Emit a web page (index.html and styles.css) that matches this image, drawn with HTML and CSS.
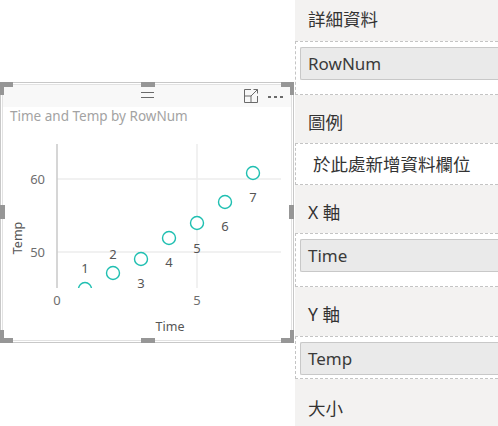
FILE: index.html
```html
<!DOCTYPE html>
<html lang="zh-Hant">
<head>
<meta charset="utf-8">
<link rel="stylesheet" href="styles.css">
</head>
<body>
<div class="page">
  <div class="canvas">
    <div class="visual">
      <div class="frame">
        <div class="vis-header">
          <span class="grip"></span>
          <span class="vis-tools">
            <svg class="focus" width="17" height="16" viewBox="0 0 17 16">
              <path d="M8 1.5H1.5V14.5H14.5V8M1.5 8H8V14.5M8 8L14.5 1.5M10.5 1.5H14.5V5.5" fill="none" stroke="#6a6a6a" stroke-width="1"/>
            </svg>
            <span class="dots"><i></i><i></i><i></i></span>
          </span>
        </div>
        <div class="vis-title">Time and Temp by RowNum</div>
        <svg class="chart" width="288" height="215" viewBox="3 125 288 215">
          <defs>
            <clipPath id="plot"><rect x="56" y="140" width="232" height="148"/></clipPath>
          </defs>
          <line x1="57" y1="179" x2="281" y2="179" class="grid"/>
          <line x1="57" y1="252" x2="281" y2="252" class="grid"/>
          <line x1="197" y1="144" x2="197" y2="288" class="grid"/>
          <line x1="57" y1="144" x2="57" y2="288" class="axis"/>
          <text x="45" y="184" class="tick" text-anchor="end">60</text>
          <text x="45" y="257" class="tick" text-anchor="end">50</text>
          <text x="57" y="305" class="tick" text-anchor="middle">0</text>
          <text x="197" y="305" class="tick" text-anchor="middle">5</text>
          <text x="170" y="331" class="atitle" text-anchor="middle">Time</text>
          <text x="0" y="0" class="atitle" text-anchor="middle" transform="translate(22 238) rotate(-90)">Temp</text>
          <g clip-path="url(#plot)" class="pts">
            <circle cx="85" cy="289" r="6.5"/>
            <circle cx="113" cy="273" r="6.5"/>
            <circle cx="141" cy="259" r="6.5"/>
            <circle cx="169" cy="238" r="6.5"/>
            <circle cx="197" cy="223" r="6.5"/>
            <circle cx="225" cy="202" r="6.5"/>
            <circle cx="253" cy="173" r="6.5"/>
          </g>
          <g class="lbl" text-anchor="middle">
            <text x="85" y="273">1</text>
            <text x="113" y="259">2</text>
            <text x="141" y="288">3</text>
            <text x="169" y="267">4</text>
            <text x="197" y="253">5</text>
            <text x="225" y="231">6</text>
            <text x="253" y="202">7</text>
          </g>
        </svg>
      </div>
      <span class="h h-tl"></span>
      <span class="h h-tr"></span>
      <span class="h h-bl"></span>
      <span class="h h-br"></span>
      <span class="h h-tm"></span>
      <span class="h h-bm"></span>
      <span class="h h-lm"></span>
      <span class="h h-rm"></span>
    </div>
  </div>
  <div class="pane">
    <div class="sec sec-first">詳細資料</div>
    <div class="well well-a"><div class="pill">RowNum</div></div>
    <div class="sec">圖例</div>
    <div class="well well-empty">於此處新增資料欄位</div>
    <div class="sec">X 軸</div>
    <div class="well well-a"><div class="pill">Time</div></div>
    <div class="sec sec-y">Y 軸</div>
    <div class="well well-b"><div class="pill">Temp</div></div>
    <div class="sec sec-last">大小</div>
  </div>
</div>
</body>
</html>
```

FILE: styles.css
```css
html, body {
  margin: 0;
  padding: 0;
  background: #ffffff;
}
body {
  width: 498px;
  height: 426px;
  overflow: hidden;
  font-family: "Noto Sans", "Noto Sans CJK TC", sans-serif;
}
.page {
  display: flex;
  height: 426px;
}
.canvas {
  width: 295px;
  flex: none;
  padding-top: 82px;
  box-sizing: border-box;
}
.visual {
  position: relative;
  width: 294px;
  height: 261px;
  box-sizing: border-box;
  border: 1px solid #c8c8c8;
  padding: 1px;
}
.frame {
  height: 100%;
  box-sizing: border-box;
  border: 1px solid #e2e2e2;
  display: flex;
  flex-direction: column;
  background: #fff;
}
.vis-header {
  height: 22px;
  flex: none;
  background: #f8f8f8;
  display: flex;
  align-items: center;
  justify-content: center;
  position: relative;
}
.grip {
  width: 13px;
  height: 4px;
  border-top: 1px solid #6a6a6a;
  border-bottom: 1px solid #6a6a6a;
  margin-top: -2px;
}
.vis-tools {
  position: absolute;
  right: 8px;
  top: 3px;
  display: flex;
  align-items: center;
  gap: 8px;
}
.focus {
  display: block;
}
.dots {
  display: flex;
  gap: 3px;
  margin-top: 2px;
}
.dots i {
  display: block;
  width: 3px;
  height: 2px;
  background: #6a6a6a;
}
.vis-title {
  height: 18px;
  flex: none;
  padding-left: 7px;
  font-size: 13.5px;
  line-height: 18px;
  color: #a3a3a3;
  white-space: nowrap;
}
.chart {
  display: block;
  flex: none;
}
.grid {
  stroke: #ececec;
  stroke-width: 1.5;
}
.axis {
  stroke: #c8c8c8;
  stroke-width: 1.5;
}
.tick {
  font-family: "Noto Sans", sans-serif;
  font-size: 13px;
  fill: #6e6e6e;
}
.atitle {
  font-family: "Noto Sans", sans-serif;
  font-size: 12.5px;
  fill: #555;
}
.pts circle {
  fill: #fff;
  stroke: #1fbfb1;
  stroke-width: 1.4;
}
.lbl text {
  font-family: "Noto Sans", sans-serif;
  font-size: 13px;
  fill: #555;
}
.h {
  position: absolute;
  background: #969696;
}
.h-tl, .h-tr, .h-bl, .h-br {
  width: 13px;
  height: 13px;
  background: transparent;
  border-color: #969696;
  border-style: solid;
  border-width: 0;
  box-sizing: border-box;
}
.h-tl { left: -1px; top: -1px; border-top-width: 5px; border-left-width: 4px; }
.h-tr { right: -1px; top: -1px; border-top-width: 5px; border-right-width: 4px; }
.h-bl { left: -1px; bottom: -1px; border-bottom-width: 5px; border-left-width: 4px; }
.h-br { right: -1px; bottom: -1px; border-bottom-width: 5px; border-right-width: 4px; }
.h-tm { left: 140px; top: -1px; width: 14px; height: 5px; }
.h-bm { left: 140px; bottom: -1px; width: 14px; height: 5px; }
.h-lm { left: -1px; top: 122px; width: 5px; height: 14px; }
.h-rm { right: -1px; top: 122px; width: 5px; height: 14px; }

.pane {
  flex: 1;
  background: #f3f2f1;
  color: #333;
  display: flex;
  flex-direction: column;
}
.sec {
  font-size: 17.5px;
  line-height: 24px;
  padding: 15px 0 9px 13px;
  height: 24px;
  flex: none;
}
.sec-first { padding-top: 7px; padding-bottom: 10px; }
.sec-y { padding-top: 15px; padding-bottom: 10px; }
.sec-last { padding-top: 17px; }
.well {
  margin-left: 0;
  border: 1px dashed #c4c4c4;
  border-right: none;
  background: #fff;
  flex: none;
}
.well-a {
  padding: 5px 0 14px 4px;
}
.well-b {
  padding: 5px 0 3px 4px;
}
.well-empty {
  box-sizing: border-box;
  padding-left: 17px;
  font-size: 17.5px;
  line-height: 40px;
  height: 42px;
  color: #333;
}
.pill {
  height: 31px;
  border: 1px solid #c8c8c8;
  border-right: none;
  background: #eaeaea;
  border-radius: 2px 0 0 2px;
  padding-left: 7px;
  font-size: 17px;
  line-height: 31px;
  color: #3a3a3a;
}
```
